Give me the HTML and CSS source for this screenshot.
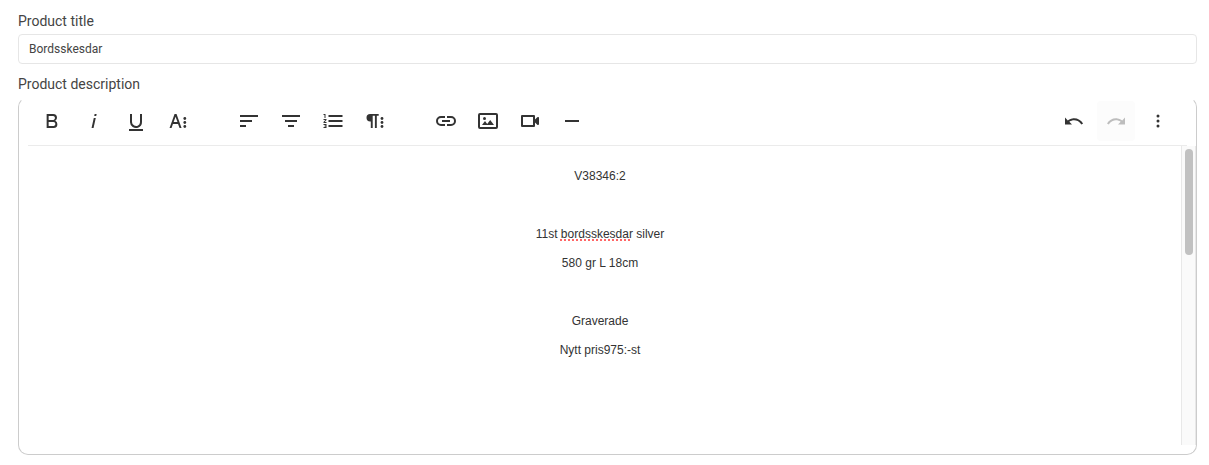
FILE: index.html
```html
<!DOCTYPE html>
<html lang="sv">
	<head>
		<meta charset="utf-8">
		<title>Edit product</title>
		<link rel="stylesheet" href="styles.css">
	</head>
	<body>
		<form class="product-form">
			<label class="field-label" for="productTitle">Product title</label>
			<input class="title-input" type="text" id="productTitle" name="productTitle" value="Bordsskesdar" spellcheck="false">

			<label class="field-label" id="descriptionLabel">Product description</label>
			<div class="editor">
				<div class="toolbar" role="toolbar">
					<div class="group">
						<button type="button" class="tool" aria-label="Bold"><svg viewBox="0 0 24 24"><path d="M15.25,11.8h0A3.68,3.68,0,0,0,17,9a3.93,3.93,0,0,0-3.86-4H6.65V19h7a3.74,3.74,0,0,0,3.7-3.78V15.1A3.64,3.64,0,0,0,15.25,11.8ZM8.65,7h4.2a2.09,2.09,0,0,1,2,1.3,2.09,2.09,0,0,1-1.37,2.61,2.23,2.23,0,0,1-.63.09H8.65Zm4.6,10H8.65V13h4.6a2.09,2.09,0,0,1,2,1.3,2.09,2.09,0,0,1-1.37,2.61A2.23,2.23,0,0,1,13.25,17Z"/></svg></button>
						<button type="button" class="tool" aria-label="Italic"><svg viewBox="0 0 24 24"><path d="M11.76,9h2l-2.2,10h-2ZM12.64,5h2l-.4,2h-2Z"/></svg></button>
						<button type="button" class="tool" aria-label="Underline"><svg viewBox="0 0 24 24"><path d="M19,20v2H5V20Zm-3-6.785a4,4,0,0,1-5.74,3.4A3.75,3.75,0,0,1,8,13.085V5H6v8.21a6,6,0,0,0,8,5.44,5.851,5.851,0,0,0,4-5.65V5H16Z"/></svg></button>
						<button type="button" class="tool" aria-label="More text"><svg viewBox="0 0 24 24"><path d="M13.55,19h2l-5-14h-2l-5,14h2l1.4-4h5.1Zm-5.9-6,1.9-5.2,1.9,5.2Z"/><circle cx="18.8" cy="9.5" r="1.4"/><circle cx="18.8" cy="13.5" r="1.4"/><circle cx="18.8" cy="17.5" r="1.4"/></svg></button>
					</div>
					<div class="group">
						<button type="button" class="tool" aria-label="Align left"><svg viewBox="0 0 24 24"><path d="M3,18h6V16H3ZM3,6V8H21V6Zm0,7H15V11H3Z"/></svg></button>
						<button type="button" class="tool" aria-label="Align center"><svg viewBox="0 0 24 24"><path d="M9,18h6V16H9ZM3,6V8H21V6Zm3,7H18V11H6Z"/></svg></button>
						<button type="button" class="tool" aria-label="Ordered list"><svg viewBox="0 0 24 24"><path d="M2.5,16h2v.5h-1v1h1V18h-2v1h3V15h-3Zm1-7h1V5h-2V6h1Zm-1,2H4.3L2.5,13.1V14h3V13H3.7l1.8-2.1V10h-3Zm5-5V8h14V6Zm0,12h14V16H7.5Zm0-5h14V11H7.5Z"/></svg></button>
						<button type="button" class="tool" aria-label="More paragraph"><svg viewBox="0 0 24 24"><path d="M7.2,5H15.7v1.8h-1.9V19h-1.9V6.8H9.7V19H7.8v-6.6H7.2a3.7,3.7,0,0,1,0-7.4Z"/><circle cx="19" cy="9.5" r="1.4"/><circle cx="19" cy="13.5" r="1.4"/><circle cx="19" cy="17.5" r="1.4"/></svg></button>
					</div>
					<div class="group">
						<button type="button" class="tool" aria-label="Insert link"><svg viewBox="0 0 24 24"><path d="M11,17H7A5,5,0,0,1,7,7h4V9H7a3,3,0,0,0,0,6h4ZM17,7H13V9h4a3,3,0,0,1,0,6H13v2h4A5,5,0,0,0,17,7Zm-1,4H8v2h8Z"/></svg></button>
						<button type="button" class="tool" aria-label="Insert image"><svg viewBox="0 0 24 24"><path fill-rule="evenodd" d="M4,4H20a2,2,0,0,1,2,2V18a2,2,0,0,1-2,2H4a2,2,0,0,1-2-2V6A2,2,0,0,1,4,4ZM4,6V18H20V6Z"/><path d="M14.2,11l3.8,5H6l3-4,2.2,3Z"/><circle cx="8.5" cy="9.5" r="1.5"/></svg></button>
						<button type="button" class="tool" aria-label="Insert video"><svg viewBox="0 0 24 24"><path d="M15,8v8H5V8H15m2,2.5V7a1,1,0,0,0-1-1H4A1,1,0,0,0,3,7V17a1,1,0,0,0,1,1H16a1,1,0,0,0,1-1V13.5l2.29,2.29A1,1,0,0,0,21,15.08V8.91a1,1,0,0,0-1.71-.71Z"/></svg></button>
						<button type="button" class="tool" aria-label="Horizontal line"><svg viewBox="0 0 24 24"><path d="M5,11H19v2H5Z"/></svg></button>
					</div>
					<div class="group group-right">
						<button type="button" class="tool" aria-label="Undo"><svg viewBox="0 0 24 24"><path d="M10.4,9.4c-1.7,0.3-3.2,0.9-4.6,2L3,8.5v7h7l-2.7-2.7c3.7-2.6,8.8-1.8,11.5,1.9c0.2,0.3,0.4,0.5,0.5,0.8l1.8-0.9C18.9,10.8,14.7,8.7,10.4,9.4z"/></svg></button>
						<button type="button" class="tool" aria-label="Redo" disabled><svg viewBox="0 0 24 24"><path d="M13.6,9.4c1.7,0.3,3.2,0.9,4.6,2L21,8.5v7h-7l2.7-2.7C13,10.1,7.9,11,5.3,14.7c-0.2,0.3-0.4,0.5-0.5,0.8L3,14.6C5.1,10.8,9.3,8.7,13.6,9.4z"/></svg></button>
						<button type="button" class="tool" aria-label="More"><svg viewBox="0 0 24 24"><circle cx="12" cy="7" r="1.5"/><circle cx="12" cy="12" r="1.5"/><circle cx="12" cy="17" r="1.5"/></svg></button>
					</div>
				</div>
				<div class="editor-body">
					<div class="content" contenteditable="true" role="textbox" aria-multiline="true" aria-labelledby="descriptionLabel" spellcheck="false">
						<p>V38346:2</p>
						<p><br></p>
						<p>11st <span class="misspelled">bordsskesdar</span> silver</p>
						<p>580 gr L 18cm</p>
						<p><br></p>
						<p>Graverade</p>
						<p>Nytt pris975:-st</p>
					</div>
					<div class="scroll-track">
						<div class="scroll-thumb"></div>
					</div>
				</div>
			</div>
		</form>
	</body>
</html>
```
FILE: styles.css
```css
body {
	margin:0;
	background-color:#fff;
	color:#444;
	font-family: Roboto, Arial, sans-serif;
}

.product-form {
	display:flex;
	flex-direction:column;
	padding:12px 12px 10px 18px;
}

.field-label {
	font-size:14px;
	line-height:18px;
	margin-bottom:4px;
}

.title-input {
	box-sizing:border-box;
	width:100%;
	height:30px;
	margin:0 0 11px;
	padding:0 10px;
	border:1px solid #e6e6e6;
	border-radius:4px;
	color:#444;
	font-family:inherit;
	font-size:12px;
	outline:none;
}

.editor {
	border:1px solid #ccc;
	border-top-color:transparent;
	border-radius:10px;
	padding-bottom:9px;
}

.toolbar {
	display:flex;
	position:relative;
}

/* divider stops short of the editor's edges */
.toolbar::after {
	content:"";
	position:absolute;
	left:9px;
	right:9px;
	bottom:0;
	height:1px;
	background-color:#ebebeb;
}

.group {
	display:flex;
	margin:0 17px 0 12px;
}

.group-right {
	margin-left:auto;
}

.tool {
	width:38px;
	height:40px;
	margin:3px 2px 5px;
	padding:8px 7px;
	border:0;
	border-radius:4px;
	background:none;
}

.tool svg {
	display:block;
	width:24px;
	height:24px;
	fill:#333;
}

.tool:disabled {
	background-color:#fcfcfc;
}

.tool:disabled svg {
	fill:#bdbdbd;
}

.editor-body {
	display:flex;
	height:299px;
}

.content {
	flex:1;
	padding:22px 20px 0;
	color:#333;
	font-family: "Liberation Sans", Arial, sans-serif;
	font-size:12px;
	line-height:17px;
	text-align:center;
	outline:none;
}

.content p {
	margin:0 0 12px;
}

.misspelled {
	text-decoration:underline dotted #f66 2px;
	text-decoration-skip-ink:none;
	text-underline-offset:1px;
}

.scroll-track {
	box-sizing:border-box;
	width:15px;
	padding:3px;
	border:solid #e8e8e8;
	border-width:0 1px;
	background-color:#fafafa;
}

.scroll-thumb {
	width:8px;
	height:106px;
	border-radius:4px;
	background-color:#c1c1c1;
}
```
